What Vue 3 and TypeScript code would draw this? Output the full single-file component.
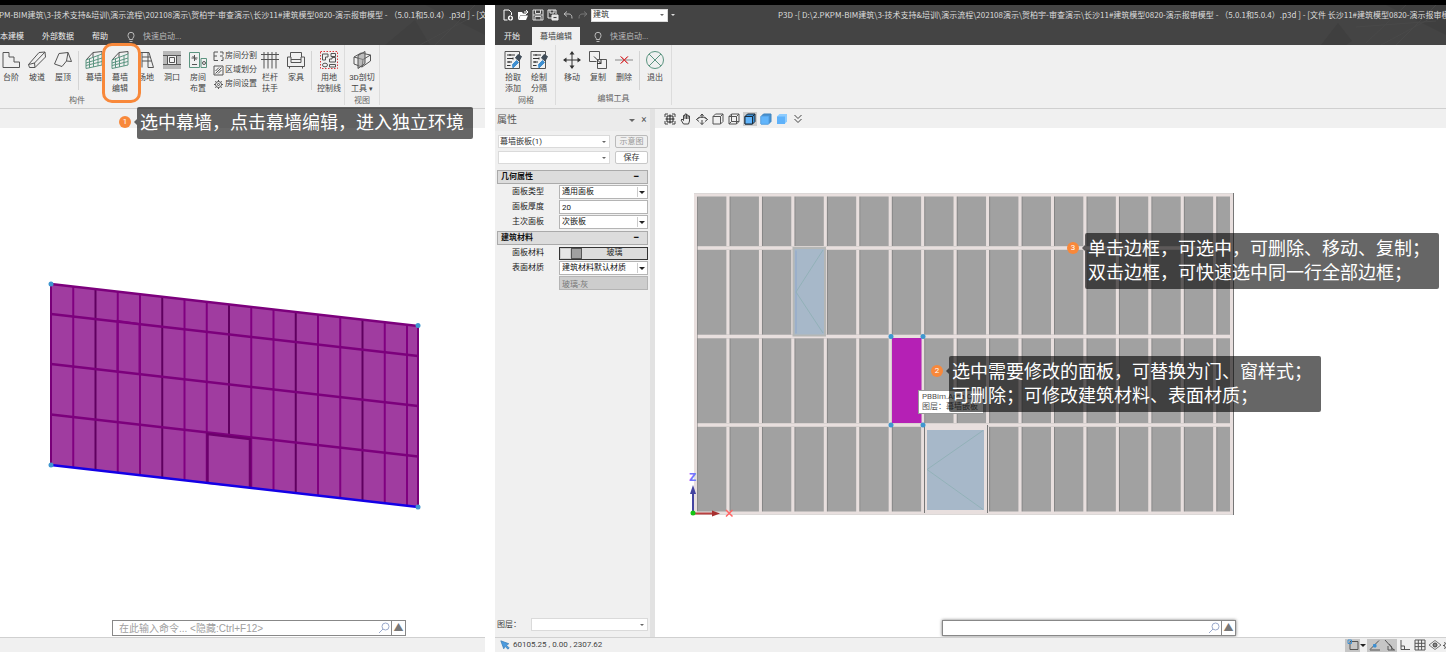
<script setup lang="ts">
import { h, ref } from 'vue'
import type { FunctionalComponent } from 'vue'

type Shape = [d: string, stroke?: string, fill?: string, dash?: string]

const G = '#5b9480'
const B = '#3f8fd0'
const R = '#d8383c'

const icons: Record<string, Shape[]> = {
  stairs: [['M1 1.5H7V6H12V11H17.5V16.5H1Z']],
  ramp: [['M.5 13.5L11 1.5L17 1L17.5 6L7 16.5H1.5Z'], ['M.5 13.5L6.5 12L17 1M6.5 12L7 16.5']],
  roof: [['M.5 13L5 2.5L14 1.5L17.5 10.5L12.5 10L8 15.5Z'], ['M14 1.5L12.5 10']],
  wall: [
    ['M1 9L8 1.5L17 .5V3M8 1.5V6'],
    ['M1 9L17 3M1 12L17 7M1 14.500L17 10.500M1 17.500L17 14M1 9V17.500M4.500 7.500V17M8.500 6V16M13 4.500V15M17 3V14', G],
  ],
  site: [['M2 1.500H12L16.500 16.500H11V10H5V16.500'], ['M5 1.500V10M11 1.500V10M5 6H13M11 10H14.500']],
  hole: [
    ['M0 0H18V18H0Z', 'none', '#b9b9b9'],
    ['M4.500 4.500H13.500V13.500H4.500Z', '#555', '#f3f3f3'],
    ['M0 4.500H4.500M13.500 4.500H18M0 13.500H4.500M13.500 13.500H18'],
    ['M6.500 6.500H11.500V11.500H6.500Z'],
  ],
  room: [
    ['M.5 1.500H10.500V16.500H.5Z', G],
    ['M12 7.500H17.500V16.500H12Z', G],
    ['M13.500 12A1.500 1.500 0 1 0 16.500 12A1.500 1.500 0 1 0 13.500 12'],
    ['M2.500 7H8.500M5.500 4V10M3.500 5L7.500 9M3 13.500H8'],
  ],
  rail: [['M0 3.500H18M0 8.500H18M3 1V17.500M7 1V17.500M11 1V17.500M15 1V17.500']],
  sofa: [
    ['M3.500 6V1.500H14.500V6'],
    ['M.5 6H4V11.500H14V6H17.500V15.500H.5Z'],
    ['M4 8.500H14M2.500 15.500V17.500M15.500 15.500V17.500'],
  ],
  land: [
    ['M.5 .5H17.500V17.500H.5Z', R, 'none', '1.5 1.5'],
    ['M2.500 3H8V6H5.500V9H2.500Z'],
    ['M11 2.500H15.500V5.500H11Z'],
    ['M9.500 8H12V6.500H15.500V11H9.500Z'],
    ['M2.500 14A2 1.500 0 0 1 7.500 14A2 1.500 0 0 1 2.500 14M9.500 13.500H15.500V16H9.500Z'],
  ],
  section: [
    ['M1 6L8 2L17.500 4V10L9 16L1 13Z'],
    ['M1 6L10 8.500L17.500 4M10 8.500L9 16'],
    ['M5 4.500L12 .5V12.500L5 17.500Z', '#555', '#9a9a9a99'],
  ],
  split: [['M5 1H1V9.500H5M1 5H4M7 1H10V3.500M10 6V9.500H8M7 5H10']],
  area: [['M1 1H10V10H1Z'], ['M2.500 6L6 2.500M2.500 8.500L8.500 2.500M5 8.500L8.500 5']],
  gear: [
    ['M5.500 1V10M1 5.500H10M2.300 2.300L8.700 8.700M8.700 2.300L2.300 8.700', '#555'],
    ['M2.500 5.500A3 3 0 1 0 8.500 5.500A3 3 0 1 0 2.500 5.500', '#555', '#f0f0f0'],
    ['M4.500 5.500A1 1 0 1 0 6.500 5.500A1 1 0 1 0 4.500 5.500'],
  ],
  sheet: [
    ['M1 .5H15.500V17.500H1Z'],
    ['M3 4H11M3 7.500H9M3 11H8M3 14.500H6.500M6 3V5M9 6.500V8.500M5 10V12', '#333'],
    ['M9 17L8.500 13.500L12.500 9.500L14.500 11.500Z', B, B],
    ['M11.500 7L14 3.500L17.500 5.500L15 10Z', '#3f4c58', '#3f4c58'],
  ],
  move: [
    ['M9 1V17M1 9H17', '#333'],
    ['M9 0L11.500 3.500H6.500ZM9 18L11.500 14.500H6.500ZM0 9L3.500 6.500V11.500ZM18 9L14.500 6.500V11.500Z', 'none', '#333'],
  ],
  copy: [
    ['M7.500 10.500H.5V.5H10.500V8'],
    ['M8.500 8.500H17.500V17.500H8.500Z', '#555', '#f0f0f0'],
    ['M5 5.500L12 12.500M12 8.500V12.500H8', '#333'],
  ],
  remove: [['M0 9H18', '#888'], ['M6 5.500L13 12.500M13 5.500L6 12.500', R], ['M5.500 5.500L12.500 12.500M12.500 5.500L5.500 12.500', R]],
  exit: [['M.5 9A8.500 8.500 0 1 0 17.500 9A8.500 8.500 0 1 0 .5 9', G], ['M3 3L15 15M15 3L3 15', G]],
  fit: [
    ['M1 4V1H4M8 1H11V4M11 8V11H8M4 11H1V8', '#444'],
    ['M3 3H9V9H3ZM6 1.500V10.500M1.500 6H10.500', '#222'],
  ],
  hand: [['M3.500 11L1 7L2 6L3.500 7.500V2.500H5V1H6.500V2H8V3H9.500V8L8.500 11ZM5 2.500V6M6.500 2V6M8 3V6', '#444']],
  orbit: [['M4 3.500L6 1L8 3.500M6 1V4.500M3 4.500L.5 6.500L3 8.500M9 4.500L11.500 6.500L9 8.500M.5 6.500C3 3.500 9 3.500 11.500 6.500M6 7V11.500M4 9.500L6 11.500L8 9.500', '#444']],
  cube: [['M1 3.500L3.500 1H11V8.500L8.500 11H1ZM1 3.500H8.500V11M8.500 3.500L11 1', '#555']],
  cubeWire: [['M1 3.500L3.500 1H11V8.500L8.500 11H1ZM1 3.500H8.500V11M8.500 3.500L11 1M3.500 1V8.500H11M3.500 8.500L1 11', '#555']],
  cubeEdge: [
    ['M1 3.500L3.500 1H11V8.500L8.500 11H1Z', '#1b2b3a', '#3f8fd0'],
    ['M1 3.500H8.500V11H1Z', '#1b2b3a', '#62b5fb'],
    ['M8.500 3.500L11 1', '#1b2b3a'],
  ],
  cubeShade: [
    ['M1 3.500L3.500 1H11V8.500L8.500 11H1Z', '#3f83bd', '#4a93d2'],
    ['M1 3.500H8.500V11H1Z', '#5aa9ee', '#62b5fb'],
  ],
  cubeFlat: [
    ['M1 3.500L3.500 1H11V8.500L8.500 11H1Z', 'none', '#8dccff'],
    ['M1 3.500H9V11H1Z', 'none', '#5fb2fa'],
  ],
  more: [['M2.500 2L6 5.500L9.500 2M2.500 6L6 9.500L9.500 6', '#444']],
  newDoc: [
    ['M2 1H7L9.500 3.500V6M5.500 11H2V1', '#fff'],
    ['M5.800 9A2.600 2.600 0 1 0 11 9A2.600 2.600 0 1 0 5.800 9', 'none', '#fff'],
    ['M7 9H10M8.500 7.500V10.500', '#444'],
  ],
  open: [['M1 3H5L6 4.500H9V6H3.500L1.500 10.500H1Z', 'none', '#fff'], ['M3.500 6.500H11L9 11H1.500Z', 'none', '#fff'], ['M7 3H10.500M9 1L11 3L9 5', '#fff']],
  save: [['M1 1H11V11H1Z', '#ddd'], ['M3.500 1V4.500H8.500V1M3 11V7.500H9V11M1 6H11', '#ddd']],
  saveAs: [['M1 1H9V5M5 9H1V1M3 1V4H7V1', '#eee'], ['M5 6H11V11H5Z', '#eee', '#ddd'], ['M6.500 8.500H9.500', '#444']],
  undo: [['M5 2.500L2 5L5 7.500M2 5H7Q10 5 10 9.500', '#bbb']],
  redo: [['M7 2.500L10 5L7 7.500M10 5H5Q2 5 2 9.500', '#777']],
  bulb: [['M4.300 8.500V7.500Q3 6 3 4.300A3 3 0 0 1 9 4.300Q9 6 7.700 7.500V8.500ZM4.500 10.500H7.500', '#bbb']],
  search: [['M4 4.500A3.500 3.500 0 1 1 11 4.500A3.500 3.500 0 1 1 4 4.500M5 7L1 11', '#9aa9cc']],
  pointer: [['M1 1L10.500 4.500L7.500 6L11 9.500L9.500 11L6 7.500L4.500 10.500Z', '#3f83bd', '#4a9be0']],
  snap: [['M3 2.500H11V10.500H3Z', '#555'], ['M1 1H4.500V4.500H1Z', B]],
  nearest: [['M1 10.500L10 1.500M1 11H11', '#555'], ['M4.500 5.500H7V8H4.500Z', B, B]],
  angle: [['M1 1L10 11M4 7V11H11M5 5Q8 6 8 11', '#555']],
  ortho: [['M2 1V10.500H11M2 7H5.500V10.500', '#555']],
  grid: [['M1 1H11V11H1ZM1 4.300H11M1 7.600H11M4.300 1V11M7.600 1V11', '#555']],
  eye: [['M0 6L6 1.500L12 6L6 10.500Z', '#777'], ['M4 6A2 2 0 1 0 8 6A2 2 0 1 0 4 6', '#444', '#888']],
}

const Icon: FunctionalComponent<{ name: string; box: number }> = (props) =>
  h(
    'svg',
    { viewBox: `0 0 ${props.box} ${props.box}`, width: props.box, height: props.box, 'aria-hidden': 'true' },
    (icons[props.name] ?? []).map(([d, stroke = '#555', fill = 'none', dash]) =>
      h('path', { d, stroke, fill, 'stroke-dasharray': dash }),
    ),
  )
Icon.props = ['name', 'box']

interface Tool { icon: string; lines: string[] }

const modelTools: Tool[][] = [
  [
    { icon: 'stairs', lines: ['台阶'] },
    { icon: 'ramp', lines: ['坡道'] },
    { icon: 'roof', lines: ['屋顶'] },
  ],
  [
    { icon: 'wall', lines: ['幕墙'] },
    { icon: 'wall', lines: ['幕墙', '编辑'] },
    { icon: 'site', lines: ['场地'] },
    { icon: 'hole', lines: ['洞口'] },
    { icon: 'room', lines: ['房间', '布置'] },
  ],
  [
    { icon: 'rail', lines: ['栏杆', '扶手'] },
    { icon: 'sofa', lines: ['家具'] },
  ],
]
const roomTools = [
  { icon: 'split', label: '房间分割' },
  { icon: 'area', label: '区域划分' },
  { icon: 'gear', label: '房间设置' },
]
const gridTools: Tool[] = [
  { icon: 'sheet', lines: ['拾取', '添加'] },
  { icon: 'sheet', lines: ['绘制', '分隔'] },
]
const editTools: Tool[] = [
  { icon: 'move', lines: ['移动'] },
  { icon: 'copy', lines: ['复制'] },
  { icon: 'remove', lines: ['删除'] },
]
const quick = [
  { icon: 'newDoc', label: '新建' },
  { icon: 'open', label: '打开' },
  { icon: 'save', label: '保存' },
  { icon: 'saveAs', label: '另存为' },
  { icon: 'undo', label: '撤销' },
  { icon: 'redo', label: '重做' },
]
const viewTools = [
  { icon: 'fit', label: '全图' },
  { icon: 'hand', label: '平移' },
  { icon: 'orbit', label: '旋转' },
  { icon: 'cube', label: '消隐' },
  { icon: 'cubeWire', label: '线框' },
  { icon: 'cubeEdge', label: '着色带边' },
  { icon: 'cubeShade', label: '着色' },
  { icon: 'cubeFlat', label: '平涂' },
  { icon: 'more', label: '更多' },
]
const activeView = ref('cubeEdge')

const thickness = ref('20')
const command = ref('')
const modelCommand = ref('')

/* perspective facade */
const slope = 42 / 367
const leftX = 51
const pitch = 22.25
const facadeLines = Array.from({ length: 16 }, (_, i) => {
  const x = leftX + pitch * (i + 1)
  const dy = (x - leftX) * slope
  return { x, y1: 284 + dy, y2: (i === 7 ? 414 : 465) + dy, dark: i % 3 === 1 }
})
const facadeRows = [284, 314, 364, 414.5]

/* elevation */
const mullions = Array.from({ length: 16 }, (_, i) => 728.5 + i * 32.45)
const transoms = [248, 336.5, 425]
const handles = [[891, 336.5], [923, 336.5], [891, 425], [923, 425]]
</script>

<template>
  <div class="page">
    <div class="strip"></div>
    <main class="windows">
      <section class="win" aria-label="建筑模型">
        <header class="head">
          <svg class="backdrop" viewBox="0 0 160 40" aria-hidden="true">
            <path d="M60 40L90 15L105 40ZM100 0L160 30V0Z" fill="#404040" />
            <path d="M95 40L160 5M110 40L150 0" stroke="#484848" fill="none" />
          </svg>
          <div class="titlebar">
            <p class="title cut">PM-BIM建筑\3-技术支持&amp;培训\演示流程\202108演示\贺柏宇-审查演示\长沙11#建筑模型0820-演示报审模型 - （5.0.1和5.0.4）.p3d ] - [文件 长</p>
          </div>
          <nav class="tabs cut-tabs">
            <button type="button" class="tab">本建模</button>
            <button type="button" class="tab">外部数据</button>
            <button type="button" class="tab">帮助</button>
            <button type="button" class="launch"><Icon name="bulb" :box="12" /><span>快速启动...</span></button>
          </nav>
        </header>

        <div class="ribbon">
          <div class="group cut-group">
            <div class="tools">
              <template v-for="(set, s) in modelTools" :key="s">
                <button v-for="(t, i) in set" :key="i" type="button" class="tool">
                  <Icon :name="t.icon" :box="18" />
                  <span v-for="l in t.lines" :key="l">{{ l }}</span>
                </button>
                <i v-if="s !== 1" class="rule"></i>
                <div v-else class="stack">
                  <button v-for="r in roomTools" :key="r.label" type="button" class="mini">
                    <Icon :name="r.icon" :box="11" /><span>{{ r.label }}</span>
                  </button>
                </div>
              </template>
              <button type="button" class="tool wide">
                <Icon name="land" :box="18" /><span>用地</span><span>控制线</span>
              </button>
            </div>
            <p class="caption">构件</p>
          </div>
          <div class="group">
            <div class="tools">
              <button type="button" class="tool wide">
                <Icon name="section" :box="18" /><span>3D剖切</span><span>工具 <b class="drop">▾</b></span>
              </button>
            </div>
            <p class="caption">视图</p>
          </div>
        </div>
        <div class="bar"></div>

        <div class="view">
          <svg class="scene" viewBox="0 128 485 510" width="485" height="510" role="img" aria-label="幕墙三维视图">
            <path d="M51 284L418 326V507L51 465Z" fill="#a03ca0" />
            <path
              v-for="l in facadeLines" :key="l.x" :d="`M${l.x} ${l.y1}V${l.y2}`"
              :stroke="l.dark ? '#600060' : '#800080'" stroke-width="2"
            />
            <path v-for="y in facadeRows" :key="y" :d="`M51 ${y}L418 ${y + 42}`" stroke="#7c007c" stroke-width="2.500" />
            <path d="M207.500 484V434L250 439V488" fill="#a03ca0" stroke="#6c006c" stroke-width="2.500" />
            <path d="M117.500 373V321L139.500 324V375" fill="none" stroke="#800080" stroke-width="2" />
            <path d="M51 284V465M418 326V507" stroke="#780078" stroke-width="2" />
            <path d="M51 465L418 507" stroke="#1400e6" stroke-width="2.500" />
            <circle v-for="p in [[51, 284], [418, 325.5], [51, 465], [418, 507]]" :key="p.join()" :cx="p[0]" :cy="p[1]" r="2.500" fill="#3f97cf" />
          </svg>
          <form class="command model-command" @submit.prevent>
            <input v-model="modelCommand" type="text" placeholder="在此输入命令... &lt;隐藏:Ctrl+F12&gt;" aria-label="命令" />
            <Icon name="search" :box="12" />
            <button type="button" aria-label="展开">▲</button>
          </form>
        </div>
        <footer class="status"></footer>

        <div class="ring"></div>
        <div class="note note-one">
          <span class="badge">1</span>
          <p class="bubble">选中幕墙，点击幕墙编辑，进入独立环境</p>
        </div>
      </section>

      <section class="win" aria-label="幕墙编辑">
        <header class="head">
          <svg class="backdrop" viewBox="0 0 160 40" aria-hidden="true">
            <path d="M35 40L52 18L66 36L60 40ZM100 0L160 30V0Z" fill="#3f3f3f" />
            <path d="M95 40L160 5M80 38L120 0M110 40L150 0M70 22L150 16" stroke="#494949" fill="none" />
          </svg>
          <div class="titlebar">
            <div class="quick">
              <button v-for="q in quick" :key="q.icon" type="button" :aria-label="q.label"><Icon :name="q.icon" :box="12" /></button>
            </div>
            <label class="combo mode">
              <select aria-label="专业"><option>建筑</option></select><i class="caret"></i>
            </label>
            <button type="button" class="custom" aria-label="自定义"><i class="caret pale"></i></button>
            <p class="title main-title">P3D -[ D:\2.PKPM-BIM建筑\3-技术支持&amp;培训\演示流程\202108演示\贺柏宇-审查演示\长沙11#建筑模型0820-演示报审模型 - （5.0.1和5.0.4）.p3d ] - [文件 长沙11#建筑模型0820-演示报审模型 -</p>
          </div>
          <nav class="tabs">
            <button type="button" class="tab first">开始</button>
            <button type="button" class="tab on">幕墙编辑</button>
            <button type="button" class="launch"><Icon name="bulb" :box="12" /><span>快速启动...</span></button>
          </nav>
        </header>

        <div class="ribbon">
          <div class="group lead">
            <div class="tools">
              <button v-for="t in gridTools" :key="t.lines[0]" type="button" class="tool">
                <Icon :name="t.icon" :box="18" /><span v-for="l in t.lines" :key="l">{{ l }}</span>
              </button>
            </div>
            <p class="caption">网格</p>
          </div>
          <div class="group pad">
            <div class="tools">
              <button v-for="t in editTools" :key="t.icon" type="button" class="tool">
                <Icon :name="t.icon" :box="18" /><span>{{ t.lines[0] }}</span>
              </button>
              <i class="rule"></i>
              <button type="button" class="tool"><Icon name="exit" :box="18" /><span>退出</span></button>
            </div>
            <p class="caption">编辑工具</p>
          </div>
        </div>

        <div class="body">
          <aside class="panel">
            <div class="panel-head">
              <h2>属性</h2>
              <button type="button" aria-label="菜单"><i class="caret big"></i></button>
              <button type="button" aria-label="关闭">×</button>
            </div>
            <div class="pick">
              <label class="combo"><select aria-label="构件"><option>幕墙嵌板(1)</option></select><i class="caret"></i></label>
              <button type="button" class="btn" disabled>示意图</button>
              <label class="combo"><select aria-label="样式"><option></option></select><i class="caret"></i></label>
              <button type="button" class="btn">保存</button>
            </div>

            <h3 class="sect">几何属性<span>−</span></h3>
            <div class="props">
              <label for="kind">面板类型</label>
              <div class="combo field"><select id="kind"><option>通用面板</option></select><i class="caret dark"></i></div>
              <label for="thick">面板厚度</label>
              <input id="thick" v-model="thickness" class="field" type="text" />
              <label for="rank">主次面板</label>
              <div class="combo field"><select id="rank"><option>次嵌板</option></select><i class="caret dark"></i></div>
            </div>
            <h3 class="sect">建筑材料<span>−</span></h3>
            <div class="props">
              <label for="mat">面板材料</label>
              <button id="mat" type="button" class="material"><i class="swatch light"></i><i class="swatch"></i><span>玻璃</span></button>
              <label for="face">表面材质</label>
              <div class="combo field"><select id="face"><option>建筑材料默认材质</option></select><i class="caret dark"></i></div>
              <span></span>
              <input class="field" type="text" value="玻璃-灰" aria-label="材质名称" disabled />
            </div>

            <div class="layer">
              <label for="layer">图层：</label>
              <div class="combo"><select id="layer"><option></option></select><i class="caret"></i></div>
            </div>
          </aside>

          <div class="work">
            <div class="bar view-tools">
              <button
                v-for="v in viewTools" :key="v.icon" type="button" :aria-label="v.label"
                :class="{ active: activeView === v.icon }" @click="activeView = v.icon"
              ><Icon :name="v.icon" :box="12" /></button>
            </div>
            <div class="view">
              <svg class="scene" viewBox="655 128 791 510" width="791" height="510" role="img" aria-label="幕墙立面">
                <path d="M694 193.500H1233V514.500H694Z" fill="#a1a1a1" />
                <path v-for="x in mullions" :key="x" :d="`M${x + 1.5} 194V514`" stroke="#858585" />
                <path v-for="x in mullions" :key="-x" :d="`M${x - 1.5} 194V514`" stroke="#c5c0bf" />
                <path v-for="x in mullions" :key="`m${x}`" :d="`M${x - 0.5} 194V514`" stroke="#e8dfde" stroke-width="3" />
                <path v-for="y in transoms" :key="y" :d="`M694 ${y}H1233`" stroke="#c9c4c3" stroke-width="4" />
                <path v-for="y in transoms" :key="`t${y}`" :d="`M694 ${y}H1233`" stroke="#e8dfde" stroke-width="3" />
                <path d="M695.500 195H1231.500V513H695.500Z" fill="none" stroke="#e8dfde" stroke-width="3" />
                <path d="M697.500 197V511" stroke="#777" stroke-width=".5" />
                <path d="M1233.500 193V515" stroke="#777" />

                <path d="M793.500 248H825V335.500H793.500Z" fill="#a7b8c9" stroke="#b5b7b6" stroke-width="2" />
                <path d="M796 250.500V333.500" stroke="#8ea6cc" />
                <path d="M823 250L796 292L823 333" fill="none" stroke="#92b1b8" />

                <path d="M924 424.500H988V514H924Z" fill="#e8dfde" />
                <path d="M927 430H984V510H927Z" fill="#a7b8c9" />
                <path d="M983 430.500L927 469.500L983 509.500" fill="none" stroke="#92b1b8" />
                <path d="M924.500 426V513M987.500 425V513" stroke="#777" />

                <path d="M892 338H921.500V423H892Z" fill="#b520b5" />
                <circle v-for="p in handles" :key="p.join()" :cx="p[0]" :cy="p[1]" r="2.500" fill="#3f97cf" />

                <path d="M693 512V491" stroke="#4444a0" stroke-width="2" />
                <path d="M693 485L696 494H690Z" fill="#4444a0" />
                <path d="M695 513.500H713" stroke="#b84040" stroke-width="2" />
                <path d="M720 513.500L712 510.500V516.500Z" fill="#a83030" />
                <circle cx="693" cy="513" r="2.500" fill="#14c414" />
                <text class="axis" x="689" y="481" fill="#7474ff">Z</text>
                <path d="M726 510L732.500 516.500M732.500 510L726 516.500" stroke="#ff6464" stroke-width="1.500" />
              </svg>

              <div class="hint"><p>PBBim.Arch.C</p><p>图层：幕墙嵌板</p></div>
              <div class="note note-two">
                <span class="badge">2</span>
                <p class="bubble">选中需要修改的面板，可替换为门、窗样式；<br />可删除；可修改建筑材料、表面材质；</p>
              </div>
              <div class="note note-three">
                <span class="badge">3</span>
                <p class="bubble">单击边框，可选中，可删除、移动、复制；<br />双击边框，可快速选中同一行全部边框；</p>
              </div>

              <form class="command edit-command" @submit.prevent>
                <input v-model="command" type="text" aria-label="命令输入" />
                <Icon name="search" :box="12" />
                <button type="button" aria-label="展开">▲</button>
              </form>
            </div>
          </div>
        </div>

        <footer class="status">
          <Icon name="pointer" :box="12" />
          <span class="coords">60105.25 , 0.00 , 2307.62</span>
          <div class="toggles">
            <button type="button" class="on" aria-label="捕捉"><Icon name="snap" :box="12" /></button>
            <button type="button" class="slim" aria-label="捕捉设置"><i class="caret big dark"></i></button>
            <button type="button" class="on" aria-label="最近点"><Icon name="nearest" :box="12" /></button>
            <button type="button" class="on" aria-label="极轴"><Icon name="angle" :box="12" /></button>
            <button type="button" aria-label="正交"><Icon name="ortho" :box="12" /></button>
            <button type="button" aria-label="栅格"><Icon name="grid" :box="12" /></button>
            <button type="button" aria-label="可见性"><Icon name="eye" :box="12" /></button>
            <button type="button" class="edge" aria-label="设置"><Icon name="gear" :box="11" /></button>
          </div>
        </footer>
      </section>
    </main>
  </div>
</template>

<style>
body {
  margin: 0;
  background: #fff;
}
</style>

<style scoped>
.page {
  display: flex;
  flex-direction: column;
  box-sizing: border-box;
  height: 100vh;
  min-height: 420px;
  padding-bottom: 1px;
  overflow: hidden;
  font: 8px/10px Roboto, "Noto Sans CJK SC", sans-serif;
  color: #444;
}
.page * { box-sizing: border-box; }
p, h2, h3 { margin: 0; font-weight: 400; }
button, input, select { font: inherit; color: inherit; margin: 0; }
button { padding: 0; border: 0; background: none; }
svg { display: block; flex: none; }
.strip { flex: none; height: 5px; background: #000; }
.windows {
  flex: 1;
  min-height: 0;
  display: grid;
  grid-template-columns: minmax(0, 485fr) minmax(0, 951fr);
  column-gap: 10px;
}
.win {
  position: relative;
  display: flex;
  flex-direction: column;
  min-width: 0;
  min-height: 0;
  overflow: hidden;
}

.head {
  position: relative;
  flex: none;
  height: 40px;
  display: flex;
  flex-direction: column;
  background: #444;
  color: #ddd;
}
.backdrop { position: absolute; right: 0; top: 0; width: 160px; height: 40px; }
.titlebar { position: relative; display: flex; align-items: center; height: 20px; }
.title { white-space: nowrap; overflow: hidden; font-family: "Noto Sans CJK SC", sans-serif; line-height: 12px; }
.cut { margin-left: -1px; }
.main-title { margin-left: 100px; }
.tabs { position: relative; display: flex; height: 20px; padding-top: 2px; }
.tab { padding: 1px 9px 0; color: #eee; white-space: nowrap; }
.tab.first { padding: 1px 12px 0 9px; }
.tab.on { background: #f0f0f0; color: #444; padding: 1px 8px 0; }
.cut-tabs { margin-left: -9px; }
.launch { display: flex; align-items: center; gap: 6px; margin-left: 12px; padding-top: 1px; color: #bbb; white-space: nowrap; }
.cut-tabs .launch { margin-left: 8px; }
.quick { display: flex; gap: 3px; padding-left: 7px; margin-right: 2px; }
.mode { width: 77px; height: 13px; flex: none; }
.custom { width: 10px; height: 10px; position: relative; flex: none; }

.ribbon {
  flex: none;
  display: flex;
  height: 64px;
  background: #f0f0f0;
  border-bottom: 1px solid #d0d0d0;
}
.group { display: flex; flex-direction: column; border-right: 1px solid #dcdcdc; margin-bottom: 3px; }
.cut-group { margin-left: -2px; }
.cut-group .caption { text-align: left; padding-left: 71px; }
.lead { padding: 0 3px 0 5px; }
.pad { padding: 0 3px; }
.tools { display: flex; height: 48px; }
.caption { text-align: center; margin-top: 2px; line-height: 12px; color: #666; }
.tool {
  display: flex;
  flex-direction: column;
  align-items: center;
  width: 26px;
  padding-top: 6px;
  line-height: 11px;
  white-space: nowrap;
}
.tool svg { margin-bottom: 3px; }
.tool.wide { width: 30px; }
.group:last-child .tool.wide { width: 34px; }
.drop { font-size: 7px; font-weight: 400; }
.rule { width: 1px; height: 39px; margin: 6px 2px 0; background: #d4d4d4; }
.stack { display: flex; flex-direction: column; width: 46px; padding: 4px 0 0 2px; }
.mini { display: flex; align-items: center; gap: 1px; height: 14px; white-space: nowrap; }
.bar { flex: none; height: 19px; background: #f0f0f0; }

.body { flex: 1; min-height: 0; display: flex; }
.panel {
  flex: none;
  display: flex;
  flex-direction: column;
  width: 160px;
  padding: 0 2px 6px;
  background: #f0f0f0;
  border-right: 5px solid #e2e2e2;
}
.panel-head {
  display: flex;
  align-items: center;
  height: 22px;
  gap: 4px;
  margin: 0 -2px 4px;
  padding: 0 2px;
  background: #ebebeb;
  color: #555;
}
.panel-head h2 { flex: 1; font-size: 10px; line-height: 14px; }
.panel-head button { position: relative; width: 8px; height: 10px; font-size: 10px; }
.pick { display: grid; grid-template-columns: 1fr 33px; gap: 3px 5px; margin-bottom: 6px; padding-left: 1px; }
.combo { position: relative; display: block; height: 13px; background: #fff; }
.combo select {
  display: block;
  width: 100%;
  height: 100%;
  padding: 0 10px 0 1px;
  border: 1px solid #dadada;
  border-radius: 0;
  appearance: none;
  background: none;
  color: #333;
}
.caret {
  position: absolute;
  right: 4px;
  top: 50%;
  margin-top: -1px;
  border: solid transparent;
  border-width: 2px 2px 0;
  border-top-color: #666;
}
.caret.big { border-width: 3px 3px 0; right: 1px; }
.caret.dark { border-top-color: #222; }
.caret.pale { border-top-color: #ddd; right: 3px; }
.field .caret { border-width: 3px 3px 0; right: 2px; }
.field::before {
  content: "";
  position: absolute;
  right: 9px;
  top: 1px;
  bottom: 1px;
  width: 1px;
  background: #ccc;
}
.btn { height: 13px; border: 1px solid #c8c8c8; border-radius: 2px; background: #fff; color: #333; }
.btn:disabled { background: #f0f0f0; border-color: #bbb; color: #999; }
.sect {
  display: flex;
  justify-content: space-between;
  height: 14px;
  padding: 0 8px 0 3px;
  border: 1px solid #aaa;
  background: #dcdcdc;
  font-size: 8px;
  line-height: 12px;
  font-weight: 700;
  color: #111;
}
.sect span { font-size: 11px; }
.props {
  display: grid;
  grid-template-columns: 52px 1fr;
  column-gap: 10px;
  grid-auto-rows: 14px;
  row-gap: 1px;
  padding: 1px 0 2px;
  align-items: center;
  color: #222;
}
.props label { text-align: right; padding-right: 5px; }
.field { width: 100%; height: 14px; border: 1px solid #b4b4b4; border-radius: 0; background: #fff; padding: 0 2px; color: #222; }
.combo.field { padding: 0; }
.combo.field select { border: 0; padding-left: 2px; color: #111; }
.field:disabled { background: #cdcdcd; color: #777; }
.material { display: flex; align-items: center; height: 13px; border: 1px solid #333; background: #dcdcdc; }
.material span { flex: 1; text-align: center; }
.swatch { width: 11px; height: 11px; background: #a0a0a0; border: 1px solid #555; }
.swatch.light { background: #e6e6e6; border-color: #ccc; }
.layer { display: flex; align-items: center; margin-top: auto; }
.layer label { width: 34px; }
.layer .combo { flex: 1; }

.work { flex: 1; min-width: 0; display: flex; flex-direction: column; }
.view-tools { display: flex; align-items: center; gap: 2px; padding-left: 8px; }
.view-tools button { width: 14px; height: 14px; padding: 1px; }
.view-tools .active { background: #ccc; }
.view { position: relative; flex: 1; min-height: 0; overflow: hidden; background: #fff; }
.axis { font: 700 10px "DejaVu Sans", sans-serif; }

.command {
  position: absolute;
  bottom: 1px;
  display: flex;
  align-items: center;
  width: 294px;
  height: 16px;
  border: 1px solid #888;
  background: #fff;
}
.model-command { left: 112px; }
.edit-command { left: 287px; box-shadow: 0 0 3px #777; }
.command input {
  flex: 1;
  min-width: 0;
  height: 100%;
  border: 0;
  padding: 0 6px;
  background: none;
  font: 10px "Liberation Sans", "Noto Sans CJK SC", sans-serif;
  outline: 0;
}
.command input::placeholder { color: #a0a0a0; }
.command button { width: 14px; height: 100%; margin-left: 1px; border-left: 1px solid #888; font-size: 10px; color: #777; }

.status {
  flex: none;
  display: flex;
  align-items: center;
  gap: 3px;
  height: 15px;
  padding-left: 5px;
  border-top: 1px solid #d0d0d0;
  background: #f0f0f0;
}
.status > svg { width: 10px; }
.toggles { display: flex; align-items: center; margin-left: auto; overflow: hidden; }
.toggles button { position: relative; display: grid; place-items: center; flex: none; width: 15px; height: 13px; }
.toggles .slim { width: 7px; }
.toggles .edge { width: 4px; justify-content: start; overflow: hidden; }
.toggles .on { background: #c6c6c6; }

.ring {
  position: absolute;
  left: 102px;
  top: 38px;
  width: 39px;
  height: 60px;
  border: 3px solid #f8883a;
  border-radius: 10px;
}
.note { position: absolute; display: flex; align-items: flex-start; gap: 6px; }
.note-one { left: 119px; top: 102px; }
.note-two { left: 276px; top: 228px; }
.note-three { left: 412px; top: 105px; }
.badge {
  width: 12px;
  height: 12px;
  margin-top: 9px;
  border-radius: 50%;
  background: #f8883a;
  color: #fff;
  text-align: center;
  line-height: 12px;
}
.bubble {
  position: relative;
  padding: 4px 9px 4px 3px;
  border-radius: 2px;
  background: rgba(0, 0, 0, 0.6);
  color: #fff;
  font-size: 18px;
  line-height: 24px;
  white-space: nowrap;
}
.bubble::before {
  content: "";
  position: absolute;
  left: -3px;
  top: 12px;
  border: solid transparent;
  border-width: 3px 3px 3px 0;
  border-right-color: rgba(0, 0, 0, 0.6);
}
.hint {
  position: absolute;
  left: 263px;
  top: 262px;
  width: 66px;
  padding: 1px 3px;
  border: 1px solid #999;
  background: #fff;
  color: #555;
  white-space: nowrap;
}
</style>
